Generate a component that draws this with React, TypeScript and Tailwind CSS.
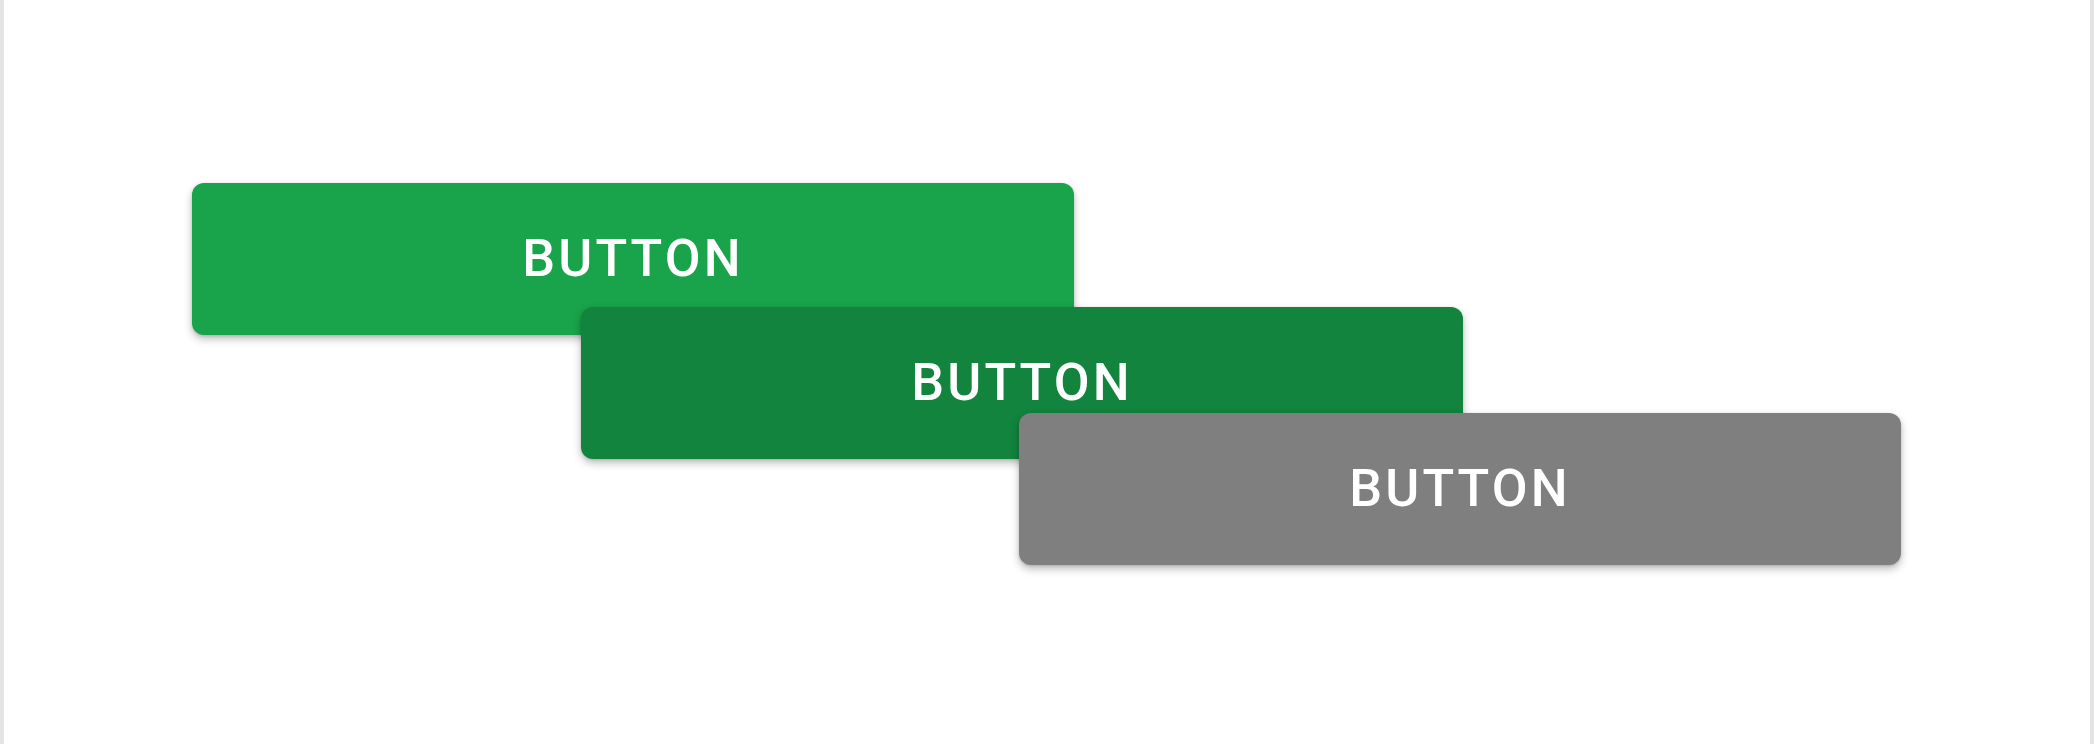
const buttons = [
  { bg: "bg-[#19a34a]", offset: "ml-[188px]", z: "z-10" },
  { bg: "bg-[#12843e]", offset: "ml-[577px] -mt-[28px]", z: "z-20" },
  { bg: "bg-[#7f7f7f]", offset: "ml-[1015px] -mt-[46px]", z: "z-30" },
];

export default function App() {
  return (
    <div className="h-[744px] w-[2094px] border-x-4 border-[#e4e4e4] bg-white pt-[183px] font-['Roboto',sans-serif]">
      <div className="flex flex-col items-start">
        {buttons.map((b, i) => (
          <button
            key={i}
            className={`relative ${b.z} ${b.offset} ${b.bg} flex h-[152px] w-[882px] items-center justify-center rounded-[12px] text-[52px] font-medium tracking-[0.06em] text-white shadow-[0_4px_8px_rgba(0,0,0,0.26),0_1px_3px_rgba(0,0,0,0.12)]`}
          >
            BUTTON
          </button>
        ))}
      </div>
    </div>
  );
}
